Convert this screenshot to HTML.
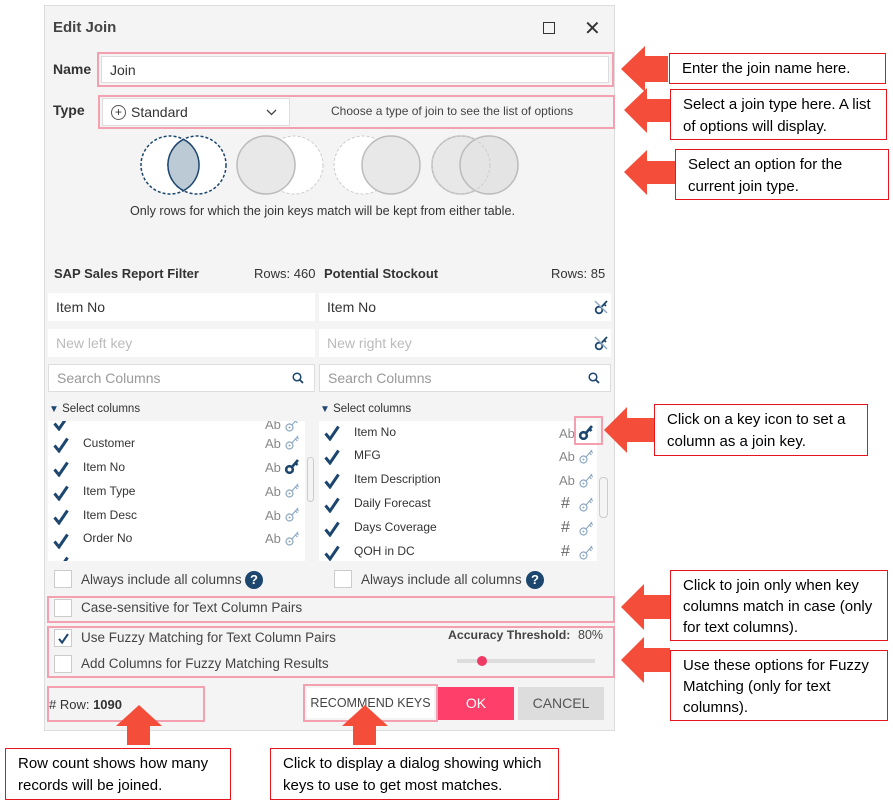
<!DOCTYPE html>
<html><head><meta charset="utf-8"><style>
*{box-sizing:border-box;margin:0;padding:0}
body{width:893px;height:803px;background:#fff;position:relative;overflow:hidden;font-family:"Liberation Sans",sans-serif;color:#333}
.a{position:absolute}
.dlg{left:44px;top:5px;width:571px;height:726px;background:#f4f4f4;border:1px solid #dcdcdc}
.pk{position:absolute;border:2px solid #f4a0b0}
.inp{position:absolute;background:#fff;border:1px solid #ddd;font-size:14px;padding-left:8px;display:flex;align-items:center}
.lbl{position:absolute;font-size:13px;font-weight:bold;color:#333}
.note{position:absolute;border:1.5px solid #e8141c;background:#fff;font-size:15px;color:#000;padding:4px 12px;line-height:22px}
.row{position:absolute;font-size:12px;color:#333}
.chk{position:absolute;width:16px;height:16px}
.ab{position:absolute;font-size:13px;color:#888}
.ky{position:absolute;width:14px;height:16px}
.cb{position:absolute;width:18px;height:18px;background:#fff;border:1px solid #ccc}
.t13{position:absolute;font-size:13.5px;color:#444}
</style></head><body>
<svg width="0" height="0" style="position:absolute">
<defs>
<symbol id="ck" viewBox="0 0 16 16"><path d="M1.5 8.5 L6 14 L14.5 1.5" fill="none" stroke="#1d466f" stroke-width="3"/></symbol>
<symbol id="ko" viewBox="0 0 14 16"><circle cx="4.5" cy="11.5" r="3.5" fill="none" stroke="#8fa9c4" stroke-width="1.2"/><path d="M7 9 L13 2 M10.5 5 L12.5 7 M12 3.3 L13.8 5" fill="none" stroke="#8fa9c4" stroke-width="1.2"/><circle cx="4.5" cy="11.5" r="1" fill="#8fa9c4"/></symbol>
<symbol id="kf" viewBox="0 0 14 16"><circle cx="4.5" cy="11.5" r="3.3" fill="none" stroke="#1d466f" stroke-width="2.6"/><path d="M7 9 L13 2 M10.5 5 L12.5 7" fill="none" stroke="#1d466f" stroke-width="2.6"/></symbol>
<symbol id="kx" viewBox="0 0 16 16"><circle cx="6" cy="11" r="3.3" fill="none" stroke="#1d466f" stroke-width="1.8"/><path d="M8 8.5 L14 2 M11 5 L13 7" fill="none" stroke="#1d466f" stroke-width="1.8"/><path d="M2 2 L14 14" stroke="#8fa9c4" stroke-width="1.5"/></symbol>
</defs></svg>
<div class="a dlg"></div>
<div class="a" style="left:53px;top:19px;font-size:15px;font-weight:bold;color:#444">Edit Join</div>
<div class="a" style="left:543px;top:22px;width:12px;height:12px;border:1.5px solid #333"></div>
<div class="a" style="left:584px;top:16px;font-size:20px;color:#333">✕</div>
<div class="lbl" style="left:53px;top:61px;font-size:14px">Name</div>
<div class="pk" style="left:97px;top:52px;width:517px;height:35px"></div>
<div class="inp" style="left:101px;top:56px;width:508px;height:27px">Join</div>
<div class="lbl" style="left:53px;top:102px;font-size:14px">Type</div>
<div class="pk" style="left:98px;top:95px;width:517px;height:34px"></div>
<div class="inp" style="left:102px;top:98px;width:188px;height:28px;font-size:14px;padding-left:8px"><span style="display:inline-block;width:15px;height:15px;border:1px solid #555;border-radius:50%;font-size:12px;line-height:13px;text-align:center;margin-right:5px">+</span>Standard<svg style="margin-left:auto;margin-right:12px" width="11" height="7"><path d="M1 1 L5.5 5.5 L10 1" fill="none" stroke="#444" stroke-width="1.3"/></svg></div>
<div class="a" style="left:331px;top:104px;font-size:12px;color:#444">Choose a type of join to see the list of options</div>
<svg class="a" style="left:138px;top:134px" width="385" height="66">
<circle cx="32" cy="31" r="29" fill="#fff" stroke="#1d466f" stroke-dasharray="3 2" stroke-width="1.5"/>
<circle cx="59" cy="31" r="29" fill="#fff" stroke="#1d466f" stroke-dasharray="3 2" stroke-width="1.5"/>
<path d="M45.5 5.3 A29 29 0 0 1 45.5 56.7 A29 29 0 0 1 45.5 5.3Z" fill="#bccad6" stroke="#1d466f" stroke-width="1.5"/>
<circle cx="156" cy="31" r="29" fill="#fff" stroke="#ccc" stroke-dasharray="3 2"/>
<circle cx="128" cy="31" r="29" fill="#e8e8e8" stroke="#bbb" stroke-width="1.5"/>
<circle cx="225" cy="31" r="29" fill="#fff" stroke="#ccc" stroke-dasharray="3 2"/>
<circle cx="253" cy="31" r="29" fill="#e8e8e8" stroke="#bbb" stroke-width="1.5"/>
<circle cx="323" cy="31" r="29" fill="#e8e8e8" stroke="#bbb" stroke-width="1.5"/>
<circle cx="351" cy="31" r="29" fill="#e4e4e4" stroke="#bbb" stroke-width="1.5"/>
<circle cx="323" cy="31" r="29" fill="none" stroke="#ccc" stroke-dasharray="3 2"/>
</svg>
<div class="a" style="left:130px;top:204px;font-size:12.6px;color:#333">Only rows for which the join keys match will be kept from either table.</div>
<div class="lbl" style="left:54px;top:266px">SAP Sales Report Filter</div>
<div class="a" style="left:254px;top:266px;font-size:13px">Rows: 460</div>
<div class="lbl" style="left:324px;top:266px">Potential Stockout</div>
<div class="a" style="left:551px;top:266px;font-size:13px">Rows: 85</div>
<div class="inp" style="left:48px;top:293px;width:267px;height:28px;border:none">Item No</div>
<div class="inp" style="left:319px;top:293px;width:292px;height:28px;border:none">Item No<svg style="margin-left:auto;margin-right:2px" width="16" height="16"><use href="#kx"/></svg></div>
<div class="inp" style="left:48px;top:329px;width:267px;height:28px;border:none;color:#bbb">New left key</div>
<div class="inp" style="left:319px;top:329px;width:292px;height:28px;border:none;color:#bbb">New right key<svg style="margin-left:auto;margin-right:2px" width="16" height="16"><use href="#kx"/></svg></div>
<div class="inp" style="left:48px;top:364px;width:267px;height:28px;color:#999">Search Columns<svg style="margin-left:auto;margin-right:10px" width="12" height="12"><circle cx="5" cy="5" r="3.8" fill="none" stroke="#1d466f" stroke-width="1.5"/><path d="M8 8 L11 11" stroke="#1d466f" stroke-width="1.8"/></svg></div>
<div class="inp" style="left:319px;top:364px;width:292px;height:28px;color:#999">Search Columns<svg style="margin-left:auto;margin-right:10px" width="12" height="12"><circle cx="5" cy="5" r="3.8" fill="none" stroke="#1d466f" stroke-width="1.5"/><path d="M8 8 L11 11" stroke="#1d466f" stroke-width="1.8"/></svg></div>
<div class="a" style="left:49px;top:403px;font-size:11.5px;color:#333"><span style="color:#1d466f;font-size:10px">▼</span> Select columns</div>
<div class="a" style="left:320px;top:403px;font-size:11.5px;color:#333"><span style="color:#1d466f;font-size:10px">▼</span> Select columns</div>
<div class="a" style="left:48px;top:421px;width:257px;height:140px;background:#fff;overflow:hidden">
<svg class="chk" style="left:5px;top:-6px"><use href="#ck"/></svg><div class="ab" style="left:217px;top:-4px">Ab</div><svg class="ky" style="left:237px;top:-5px"><use href="#ko"/></svg>
<svg class="chk" style="left:5px;top:16px"><use href="#ck"/></svg><div class="row" style="left:35px;top:15px">Customer</div><div class="ab" style="left:217px;top:15px">Ab</div><svg class="ky" style="left:237px;top:13px"><use href="#ko"/></svg>
<svg class="chk" style="left:5px;top:40px"><use href="#ck"/></svg><div class="row" style="left:35px;top:39px">Item No</div><div class="ab" style="left:217px;top:39px">Ab</div><svg class="ky" style="left:237px;top:37px"><use href="#kf"/></svg>
<svg class="chk" style="left:5px;top:64px"><use href="#ck"/></svg><div class="row" style="left:35px;top:63px">Item Type</div><div class="ab" style="left:217px;top:63px">Ab</div><svg class="ky" style="left:237px;top:61px"><use href="#ko"/></svg>
<svg class="chk" style="left:5px;top:88px"><use href="#ck"/></svg><div class="row" style="left:35px;top:87px">Item Desc</div><div class="ab" style="left:217px;top:87px">Ab</div><svg class="ky" style="left:237px;top:85px"><use href="#ko"/></svg>
<svg class="chk" style="left:5px;top:112px"><use href="#ck"/></svg><div class="row" style="left:35px;top:110px">Order No</div><div class="ab" style="left:217px;top:110px">Ab</div><svg class="ky" style="left:237px;top:109px"><use href="#ko"/></svg>
<svg class="chk" style="left:5px;top:135px"><use href="#ck"/></svg>
</div>
<div class="a" style="left:307px;top:457px;width:7px;height:45px;border:1px solid #ccc;border-radius:4px"></div>
<div class="a" style="left:319px;top:421px;width:278px;height:140px;background:#fff;overflow:hidden">
<svg class="chk" style="left:5px;top:4px"><use href="#ck"/></svg><div class="row" style="left:35px;top:4px">Item No</div><div class="ab" style="left:240px;top:5px">Ab</div><svg class="ky" style="left:260px;top:3px"><use href="#kf"/></svg>
<svg class="chk" style="left:5px;top:28px"><use href="#ck"/></svg><div class="row" style="left:35px;top:27px">MFG</div><div class="ab" style="left:240px;top:28px">Ab</div><svg class="ky" style="left:260px;top:27px"><use href="#ko"/></svg>
<svg class="chk" style="left:5px;top:52px"><use href="#ck"/></svg><div class="row" style="left:35px;top:51px">Item Description</div><div class="ab" style="left:240px;top:52px">Ab</div><svg class="ky" style="left:260px;top:51px"><use href="#ko"/></svg>
<svg class="chk" style="left:5px;top:76px"><use href="#ck"/></svg><div class="row" style="left:35px;top:75px">Daily Forecast</div><div class="ab" style="left:242px;top:74px;font-size:16px;color:#666">#</div><svg class="ky" style="left:260px;top:75px"><use href="#ko"/></svg>
<svg class="chk" style="left:5px;top:100px"><use href="#ck"/></svg><div class="row" style="left:35px;top:99px">Days Coverage</div><div class="ab" style="left:242px;top:98px;font-size:16px;color:#666">#</div><svg class="ky" style="left:260px;top:99px"><use href="#ko"/></svg>
<svg class="chk" style="left:5px;top:124px"><use href="#ck"/></svg><div class="row" style="left:35px;top:123px">QOH in DC</div><div class="ab" style="left:242px;top:122px;font-size:16px;color:#666">#</div><svg class="ky" style="left:260px;top:123px"><use href="#ko"/></svg>
</div>
<div class="a" style="left:574px;top:416px;width:29px;height:29px;border:2px solid #f4a0b0"></div>
<div class="a" style="left:599px;top:477px;width:9px;height:41px;border:1px solid #ccc;border-radius:4px"></div>
<div class="cb" style="left:54px;top:570px"></div><div class="t13" style="left:81px;top:572px">Always include all columns</div>
<div class="a" style="left:245px;top:571px;width:18px;height:18px;border-radius:50%;background:#1d466f;color:#fff;font-size:13px;font-weight:bold;text-align:center;line-height:18px">?</div>
<div class="cb" style="left:334px;top:570px"></div><div class="t13" style="left:361px;top:572px">Always include all columns</div>
<div class="a" style="left:526px;top:571px;width:18px;height:18px;border-radius:50%;background:#1d466f;color:#fff;font-size:13px;font-weight:bold;text-align:center;line-height:18px">?</div>
<div class="pk" style="left:47px;top:596px;width:568px;height:27px"></div>
<div class="cb" style="left:54px;top:599px"></div><div class="t13" style="left:81px;top:600px">Case-sensitive for Text Column Pairs</div>
<div class="pk" style="left:47px;top:626px;width:568px;height:52px"></div>
<div class="cb" style="left:54px;top:629px"><svg style="position:absolute;left:3px;top:3px" width="11" height="11" viewBox="0 0 16 16"><use href="#ck"/></svg></div><div class="t13" style="left:81px;top:630px">Use Fuzzy Matching for Text Column Pairs</div>
<div class="cb" style="left:54px;top:655px"></div><div class="t13" style="left:81px;top:656px">Add Columns for Fuzzy Matching Results</div>
<div class="a" style="left:448px;top:628px;font-size:12.3px;font-weight:bold;color:#444">Accuracy Threshold:</div>
<div class="a" style="left:578px;top:628px;font-size:12.5px;color:#444">80%</div>
<div class="a" style="left:457px;top:659px;width:138px;height:4px;background:#ddd"></div>
<div class="a" style="left:477px;top:656px;width:10px;height:10px;border-radius:50%;background:#f03a66"></div>
<div class="pk" style="left:47px;top:686px;width:158px;height:36px"></div>
<div class="a" style="left:49px;top:697px;font-size:13px">#&nbsp;Row: <b>1090</b></div>
<div class="pk" style="left:303px;top:684px;width:135px;height:38px"></div>
<div class="a" style="left:307px;top:688px;width:127px;height:30px;background:#fff;font-size:12.5px;color:#444;text-align:center;line-height:30px">RECOMMEND KEYS</div>
<div class="a" style="left:438px;top:687px;width:76px;height:33px;background:#fd3f6a;color:#fff;font-size:14px;text-align:center;line-height:33px">OK</div>
<div class="a" style="left:518px;top:687px;width:86px;height:33px;background:#ddd;color:#555;font-size:14px;text-align:center;line-height:33px">CANCEL</div>
<svg class="a" style="left:0;top:0" width="893" height="803">
<g fill="#f44e3a">
<polygon points="621,69 645,46 645,56 668,56 668,82 645,82 645,92"/>
<polygon points="624,110 647,88 647,99 670,99 670,122 647,122 647,133"/>
<polygon points="624,172 647,150 647,161 676,161 676,184 647,184 647,195"/>
<polygon points="604,430 627,407 627,418 654,418 654,442 627,442 627,453"/>
<polygon points="621,607 644,584 644,595 670,595 670,619 644,619 644,630"/>
<polygon points="621,660 644,637 644,648 670,648 670,672 644,672 644,683"/>
<polygon points="139,705 162,726 150,726 150,745 127,745 127,726 116,726"/>
<polygon points="365,705 388,726 376,726 376,745 353,745 353,726 342,726"/>
</g></svg>
<div class="note" style="left:669px;top:53px;width:217px;height:31px">Enter the join name here.</div>
<div class="note" style="left:670px;top:89px;width:217px;height:51px">Select a join type here. A list of options will display.</div>
<div class="note" style="left:675px;top:149px;width:214px;height:51px">Select an option for the current join type.</div>
<div class="note" style="left:654px;top:404px;width:214px;height:52px">Click on a key icon to set a column as a join key.</div>
<div class="note" style="left:670px;top:570px;width:218px;height:71px;line-height:21px">Click to join only when key columns match in case (only for text columns).</div>
<div class="note" style="left:670px;top:650px;width:218px;height:71px;line-height:21px">Use these options for Fuzzy Matching (only for text columns).</div>
<div class="note" style="left:5px;top:748px;width:226px;height:52px">Row count shows how many records will be joined.</div>
<div class="note" style="left:270px;top:748px;width:289px;height:52px">Click to display a dialog showing which keys to use to get most matches.</div>
</body></html>
